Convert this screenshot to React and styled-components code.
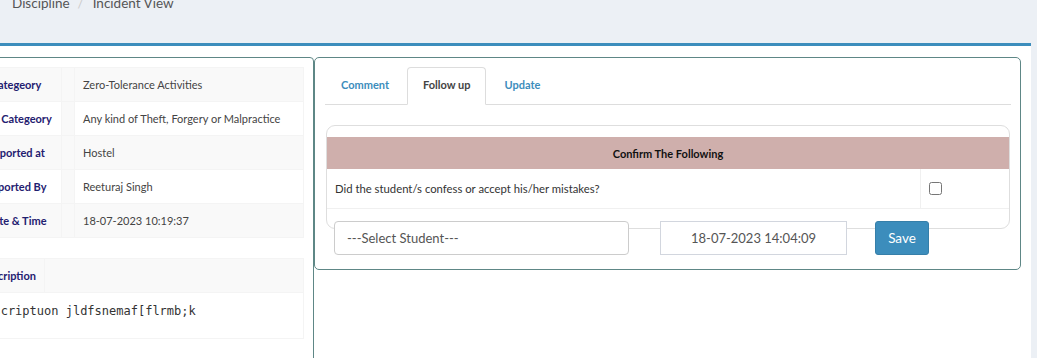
import React from 'react'
import styled, { createGlobalStyle } from 'styled-components'

const GlobalStyle = createGlobalStyle`
  * { box-sizing: border-box; }
  html, body { margin: 0; padding: 0; overflow: hidden; }
  body {
    background: #ecf0f5;
    font-family: Lato, "Noto Sans", sans-serif;
    color: #333;
  }
`

const Page = styled.div`
  width: 1037px;
  height: 358px;
  overflow: hidden;
`

const BreadcrumbBar = styled.div`
  height: 43px;
  display: flow-root;
`

const Crumbs = styled.ol`
  list-style: none;
  margin: -7px 0 0;
  padding: 0 0 0 12px;
  display: flex;
  font-size: 13.5px;
  line-height: 20px;
  color: #555;

  li + li::before {
    content: '/';
    color: #ccc;
    padding: 0 9px 0 8px;
  }
`

const MainBox = styled.div`
  width: 1031px;
  height: 400px;
  background: #fff;
  border-top: 3px solid #3c8dbc;
  padding-top: 11px;
  display: flex;
  align-items: flex-start;
`

const LeftPanel = styled.div`
  margin-left: -40px;
  width: 354px;
  height: 400px;
  border: 1px solid #5e8786;
  border-radius: 0 4px 0 0;
  padding: 9px 9px;
`

const InfoTable = styled.table`
  width: 100%;
  border-collapse: collapse;
  font-size: 11px;
  margin-bottom: ${p => p.$gap || 0}px;
`

const Row = styled.tr`
  background: ${p => (p.$striped ? '#f9f9f9' : '#fff')};
`

const Label = styled.th`
  width: ${p => (p.$width ? `${p.$width}px` : 'auto')};
  height: 34px;
  border: 1px solid #f4f4f4;
  text-align: ${p => p.$align || 'center'};
  padding: 0 8px;
  font-weight: 700;
  color: #1f2070;
  white-space: nowrap;
  background: ${p => (p.$fill ? '#f9f9f9' : 'inherit')};
`

const Spacer = styled.td`
  width: 13px;
  border: 1px solid #f4f4f4;
  background: #f9f9f9;
`

const Value = styled.td`
  border: 1px solid #f4f4f4;
  padding: 0 8px;
  color: #444;
  vertical-align: middle;
`

const Pre = styled.td`
  height: 46px;
  border: 1px solid #f4f4f4;
  padding: 11px 8px 0;
  vertical-align: top;
  font-family: "DejaVu Sans Mono", "Liberation Mono", monospace;
  font-size: 12px;
  color: #333;
  white-space: pre;
`

const RightPanel = styled.div`
  width: 707px;
  height: 213px;
  border: 1px solid #5e8786;
  border-radius: 5px;
  padding: 9px 9px 0 10px;
`

const Tabs = styled.ul`
  list-style: none;
  margin: 0;
  padding: 0;
  display: flex;
  border-bottom: 1px solid #ddd;
  height: 38px;
`

const Tab = styled.li`
  margin: 0 2px -1px 0;
  height: 38px;
  padding: 0 15px 3px;
  display: flex;
  align-items: center;
  font-size: 11px;
  font-weight: 700;
  color: ${p => (p.$active ? '#444' : '#3c8dbc')};
  background: ${p => (p.$active ? '#fff' : 'transparent')};
  border: 1px solid ${p => (p.$active ? '#ddd' : 'transparent')};
  border-bottom-color: ${p => (p.$active ? '#fff' : 'transparent')};
  border-radius: 4px 4px 0 0;
`

const Card = styled.div`
  margin: 20px 1px 0 1px;
  height: 104px;
  border: 1px solid #dedede;
  border-radius: 9px;
  padding-top: 11px;
`

const ConfirmTable = styled.table`
  width: 100%;
  border-collapse: collapse;
  font-size: 11px;
`

const ConfirmHead = styled.th`
  height: 32px;
  background: #cfafac;
  color: #111;
  font-weight: 700;
  text-align: center;
`

const Question = styled.td`
  height: 39px;
  padding: 0 8px;
  color: #333;
  font-size: 11.3px;
  border-bottom: 1px solid #f0f0f0;
`

const Check = styled.td`
  width: 89px;
  padding: 3px 0 0 8px;
  border-left: 1px solid #f0f0f0;
  border-bottom: 1px solid #f0f0f0;

  input {
    margin: 0;
    width: 13px;
    height: 13px;
  }
`

const FormRow = styled.div`
  display: flex;
  align-items: center;
  margin: 12px 0 0 7px;
`

const Select = styled.div`
  width: 295px;
  height: 34px;
  display: flex;
  align-items: center;
  padding: 0 12px;
  background: #fff;
  border: 1px solid #ccc;
  border-radius: 4px;
  font-size: 13px;
  color: #555;
`

const DateBox = styled.div`
  margin-left: 31px;
  width: 187px;
  height: 34px;
  display: flex;
  align-items: center;
  justify-content: center;
  background: #fff;
  border: 1px solid #d2d6de;
  font-size: 13px;
  color: #555;
`

const SaveButton = styled.button`
  margin-left: 28px;
  width: 54px;
  height: 34px;
  padding: 0;
  background: #3c8dbc;
  border: 1px solid #367fa9;
  border-radius: 3px;
  color: #fff;
  font-family: inherit;
  font-size: 13.5px;
`

const details = [
  ['Categeory', 'Zero-Tolerance Activities'],
  ['Sub Categeory', 'Any kind of Theft, Forgery or Malpractice'],
  ['Reported at', 'Hostel'],
  ['Reported By', 'Reeturaj Singh'],
  ['Date & Time', '18-07-2023 10:19:37'],
]

export default function App() {
  return (
    <Page>
      <GlobalStyle />
      <BreadcrumbBar>
        <Crumbs>
          <li>Discipline</li>
          <li>Incident View</li>
        </Crumbs>
      </BreadcrumbBar>
      <MainBox>
        <LeftPanel>
          <InfoTable $gap={20}>
            <tbody>
              {details.map(([k, v], i) => (
                <Row key={k} $striped={i % 2 === 0}>
                  <Label $width={91}>{k}</Label>
                  <Spacer />
                  <Value>{v}</Value>
                </Row>
              ))}
            </tbody>
          </InfoTable>
          <InfoTable>
            <tbody>
              <Row $striped>
                <Label $width={75} $align="left" $fill>Description</Label>
                <Label $fill style={{ width: '100%' }} />
              </Row>
              <Row>
                <Pre colSpan={2}>Descriptuon jldfsnemaf[flrmb;k</Pre>
              </Row>
            </tbody>
          </InfoTable>
        </LeftPanel>
        <RightPanel>
          <Tabs>
            <Tab>Comment</Tab>
            <Tab $active>Follow up</Tab>
            <Tab>Update</Tab>
          </Tabs>
          <Card>
            <ConfirmTable>
              <thead>
                <tr>
                  <ConfirmHead colSpan={2}>Confirm The Following</ConfirmHead>
                </tr>
              </thead>
              <tbody>
                <tr>
                  <Question>Did the student/s confess or accept his/her mistakes?</Question>
                  <Check><input type="checkbox" /></Check>
                </tr>
              </tbody>
            </ConfirmTable>
            <FormRow>
              <Select>---Select Student---</Select>
              <DateBox>18-07-2023 14:04:09</DateBox>
              <SaveButton>Save</SaveButton>
            </FormRow>
          </Card>
        </RightPanel>
      </MainBox>
    </Page>
  )
}
